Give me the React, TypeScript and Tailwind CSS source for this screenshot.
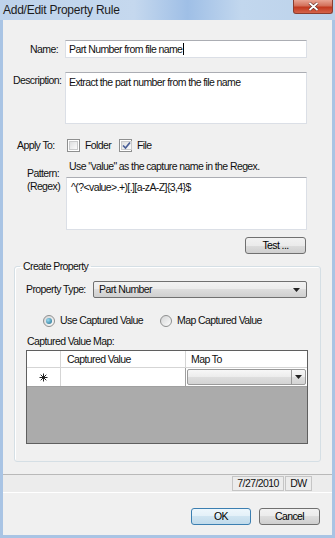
import type { ReactNode } from "react";

function CheckBox({ checked }: { checked?: boolean }) {
  return (
    <span className="w-[13px] h-[13px] shrink-0 border border-[#8e8f8f] bg-white p-[1px] flex">
      <span className="flex-1 border border-[#c9cacb] bg-gradient-to-br from-[#dedfe0] to-[#fbfbfb] flex items-center justify-center">
        {checked && (
          <svg width="9" height="9" viewBox="0 0 9 9">
            <path d="M1 4.5 L3.5 7 L8 1.5" fill="none" stroke="#4a5f97" strokeWidth="1.7" />
          </svg>
        )}
      </span>
    </span>
  );
}

function Radio({ checked }: { checked?: boolean }) {
  return (
    <span className="w-[12px] h-[12px] shrink-0 rounded-full border border-[#8e8f8f] bg-gradient-to-br from-[#d4d5d6] to-[#fcfcfc] flex items-center justify-center">
      {checked && (
        <span className="w-[6px] h-[6px] rounded-full bg-[radial-gradient(circle_at_35%_35%,#9adbf2,#1d6a8a)]" />
      )}
    </span>
  );
}

function Arrow() {
  return (
    <svg width="7" height="4" viewBox="0 0 7 4">
      <path d="M0 0 H7 L3.5 4 Z" fill="#222" />
    </svg>
  );
}

function WinButton({ children, primary, className }: { children: ReactNode; primary?: boolean; className: string }) {
  return (
    <button
      className={`h-[17px] rounded-[3px] border leading-none text-black ${
        primary
          ? "border-[#3c7fb1] bg-[linear-gradient(#eef7fc,#e3f0f8_50%,#cfe4f1_50%,#c1dbeb)]"
          : "border-[#707070] bg-[linear-gradient(#f2f2f2,#ebebeb_50%,#dddddd_50%,#cfcfcf)]"
      } ${className}`}
    >
      {children}
    </button>
  );
}

const boxBorder = "border border-[#dbdfe6] border-t-[#abadb3] bg-white";

export default function App() {
  return (
    <div className="w-[335px] h-[538px] flex flex-col bg-[#a9c4e4] font-['Liberation_Sans',Arial,sans-serif] text-[10.5px] tracking-[-0.6px] leading-[13px] text-[#111]">
      {/* title bar */}
      <div className="h-[20px] flex items-start justify-between bg-[linear-gradient(90deg,#bed3eb,#c5d8ee_40%,#9fbfe6_56%,#c2d7ee_72%,#bcd2ea)]">
        <span className="ml-[3px] mt-[2px] text-[12px] tracking-[-0.25px] leading-[16px] text-[#1c1c1c]">
          Add/Edit Property Rule
        </span>
        <span className="mr-[2px] w-[40px] h-[14px] rounded-b-[3px] border border-t-0 border-[#8b3d2f] bg-[linear-gradient(#e8a493,#d3705a_45%,#c2391f_55%,#d4634a)] flex items-center justify-center">
          <svg width="11" height="9" viewBox="0 0 11 9">
            <path d="M1.5 1 L9.5 8 M9.5 1 L1.5 8" stroke="#5a2a22" strokeWidth="3" />
            <path d="M1.5 1 L9.5 8 M9.5 1 L1.5 8" stroke="#fff" strokeWidth="1.8" />
          </svg>
        </span>
      </div>

      {/* client area */}
      <div className="mx-[3px] mb-[3px] flex-1 bg-[#f0f0f0] flex flex-col">
        <div className="mt-[20px] flex items-center h-[18px]">
          <span className="w-[55px] text-right">Name:</span>
          <div className={`ml-[7px] w-[242px] h-[18px] ${boxBorder} px-[3px] flex items-center`}>
            Part Number from file name<span className="ml-[1px] w-px h-[12px] bg-black" />
          </div>
        </div>

        <div className="mt-[14px] flex items-start">
          <span className="w-[62px] pl-[10px] mt-[2px]">Description:</span>
          <div className={`w-[242px] h-[52px] ${boxBorder} px-[3px] pt-[3px]`}>
            Extract the part number from the file name
          </div>
        </div>

        <div className="mt-[15px] flex items-center h-[13px]">
          <span className="w-[64px] pl-[14px]">Apply To:</span>
          <CheckBox />
          <span className="ml-[5px] w-[34px]">Folder</span>
          <CheckBox checked />
          <span className="ml-[5px]">File</span>
        </div>

        <div className="mt-[8px] flex items-start">
          <div className="w-[63px] pl-[24px] pt-[7px] flex flex-col">
            <span>Pattern:</span>
            <span>(Regex)</span>
          </div>
          <div className="flex flex-col">
            <span className="pl-[3px]">Use "value" as the capture name in the Regex.</span>
            <div className={`mt-[4px] w-[241px] h-[53px] ${boxBorder} px-[4px] pt-[3px]`}>
              ^(?&lt;value&gt;.+)[.][a-zA-Z]{"{3,4}"}$
            </div>
          </div>
        </div>

        <WinButton className="mt-[7px] self-end mr-[26px] w-[61px]">Test ...</WinButton>

        <fieldset className="mt-[6px] mx-[11px] h-[202px] border border-[#d5dfe5] rounded-[3px] shadow-[inset_1px_1px_0_#fff]">
          <legend className="ml-[5px] px-[3px] leading-[13px]">Create Property</legend>

          <div className="mt-[8px] flex items-center h-[17px]">
            <span className="w-[78px] pl-[11px] whitespace-nowrap">Property Type:</span>
            <div className="w-[214px] h-[17px] rounded-[2px] border border-[#707070] bg-[linear-gradient(#f2f2f2,#ebebeb_50%,#dddddd_50%,#cfcfcf)] flex items-center justify-between pl-[5px] pr-[6px]">
              <span>Part Number</span>
              <Arrow />
            </div>
          </div>

          <div className="mt-[16px] flex items-center h-[13px]">
            <span className="ml-[28px]"><Radio checked /></span>
            <span className="ml-[5px] w-[100px]">Use Captured Value</span>
            <Radio />
            <span className="ml-[5px]">Map Captured Value</span>
          </div>

          <div className="mt-[8px] pl-[12px]">Captured Value Map:</div>

          <div className="mt-[2px] ml-[11px] w-[282px] h-[94px] border border-[#5f5f5f] bg-[#ababab] flex flex-col">
            <div className="h-[17px] flex bg-white border-b border-[#d5d5d5]">
              <div className="w-[34px] border-r border-[#d5d5d5]" />
              <div className="w-[125px] pl-[6px] flex items-center border-r border-[#d5d5d5]">Captured Value</div>
              <div className="flex-1 pl-[5px] flex items-center">Map To</div>
            </div>
            <div className="h-[19px] flex bg-white border-b border-[#a0a0a0]">
              <div className="w-[34px] border-r border-[#d5d5d5] flex items-center justify-center">
                <svg width="9" height="9" viewBox="0 0 9 9">
                  <path d="M4.5 0.5 V8.5 M0.5 4.5 H8.5 M1.7 1.7 L7.3 7.3 M7.3 1.7 L1.7 7.3" stroke="#222" strokeWidth="1" />
                </svg>
              </div>
              <div className="w-[125px] border-r border-[#a0a0a0]" />
              <div className="flex-1 p-[1px] flex">
                <div className="flex-1 border border-[#9a9a9a] rounded-[2px] bg-[linear-gradient(#f7f7f7,#ececec_50%,#dedede_50%,#d3d3d3)] flex justify-end">
                  <div className="w-[14px] border-l border-[#9a9a9a] flex items-center justify-center">
                    <Arrow />
                  </div>
                </div>
              </div>
            </div>
          </div>
        </fieldset>

        <div className="mt-[12px] h-[19px] border-t border-[#b9b9b9] border-b border-b-white bg-[#ececec] flex justify-end pr-[20px] pt-[1px]">
          <div className="h-[15px] w-[52px] border border-[#c5c5c5] flex items-center justify-center">7/27/2010</div>
          <div className="ml-[1px] h-[15px] w-[27px] border border-[#c5c5c5] flex items-center justify-center">DW</div>
        </div>

        <div className="mt-[15px] flex justify-end pr-[12px] gap-[8px]">
          <WinButton primary className="w-[60px]">OK</WinButton>
          <WinButton className="w-[61px]">Cancel</WinButton>
        </div>
      </div>
    </div>
  );
}
